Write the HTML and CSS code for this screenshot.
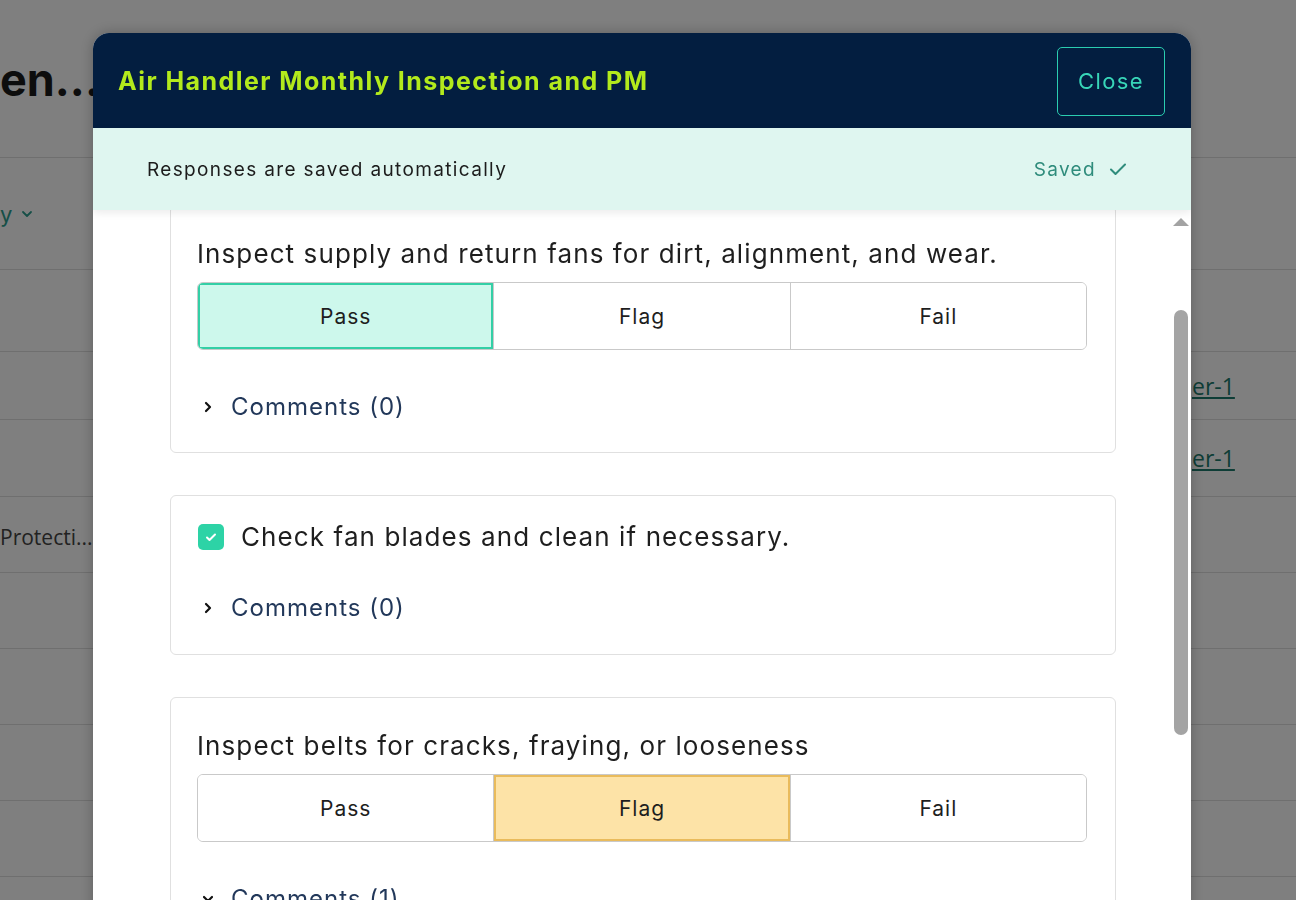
FILE: index.html
```html
<!DOCTYPE html>
<html lang="en">
<head>
    <meta charset="UTF-8">
    <meta name="viewport" content="width=device-width, initial-scale=1.0">
    <title>Air Handler Monthly Inspection and PM</title>
    <link rel="stylesheet" href="styles.css">
</head>
<body>

<div class="page">
    <h1 class="page-title">en...</h1>
    <div class="filters">
        <span class="filter">y
            <svg width="12" height="8" viewBox="0 0 12 8"><path d="M2 2l4 4 4-4" fill="none" stroke="currentColor" stroke-width="1.8" stroke-linecap="round" stroke-linejoin="round"/></svg>
        </span>
    </div>
    <div class="row h82"></div>
    <div class="row h68"><span class="cell-left"></span><a class="cell-link" href="#">er-1</a></div>
    <div class="row h77"><span class="cell-left"></span><a class="cell-link" href="#">er-1</a></div>
    <div class="row h75"><span class="cell-left">Protecti...</span></div>
    <div class="row h76"></div>
    <div class="row h76"></div>
    <div class="row h76"></div>
    <div class="row h76"></div>
</div>

<div class="overlay"></div>

<div class="modal">
    <div class="modal-header">
        <h2 class="modal-title">Air Handler Monthly Inspection and PM</h2>
        <button class="close-btn">Close</button>
    </div>
    <div class="save-bar">
        <span>Responses are saved automatically</span>
        <span class="saved">Saved
            <svg width="18" height="14" viewBox="0 0 18 14"><path d="M2 7.5l4.5 4.5L16 2.5" fill="none" stroke="currentColor" stroke-width="2" stroke-linecap="round" stroke-linejoin="round"/></svg>
        </span>
    </div>
    <div class="modal-body">
        <div class="task-list">
            <div class="task">
                <p class="task-text">Inspect supply and return fans for dirt, alignment, and wear.</p>
                <div class="choice-group">
                    <button class="choice pass selected">Pass</button>
                    <button class="choice">Flag</button>
                    <button class="choice">Fail</button>
                </div>
                <div class="comments">
                    <svg width="10" height="12" viewBox="0 0 10 12"><path d="M3 2l4 4-4 4" fill="none" stroke="currentColor" stroke-width="2.2" stroke-linecap="round" stroke-linejoin="round"/></svg>
                    <span>Comments (0)</span>
                </div>
            </div>

            <div class="task check-task">
                <label class="check-row">
                    <span class="checkbox">
                        <svg width="14" height="12" viewBox="0 0 14 12"><path d="M3 6.5l2.5 2.5L11 3.5" fill="none" stroke="#fff" stroke-width="2" stroke-linecap="round" stroke-linejoin="round"/></svg>
                    </span>
                    <span class="task-text">Check fan blades and clean if necessary.</span>
                </label>
                <div class="comments">
                    <svg width="10" height="12" viewBox="0 0 10 12"><path d="M3 2l4 4-4 4" fill="none" stroke="currentColor" stroke-width="2.2" stroke-linecap="round" stroke-linejoin="round"/></svg>
                    <span>Comments (0)</span>
                </div>
            </div>

            <div class="task">
                <p class="task-text">Inspect belts for cracks, fraying, or looseness</p>
                <div class="choice-group">
                    <button class="choice">Pass</button>
                    <button class="choice flag selected">Flag</button>
                    <button class="choice">Fail</button>
                </div>
                <div class="comments">
                    <svg width="10" height="12" viewBox="0 0 10 12"><path d="M1 4l4 4 4-4" fill="none" stroke="currentColor" stroke-width="2.2" stroke-linecap="round" stroke-linejoin="round"/></svg>
                    <span>Comments (1)</span>
                </div>
            </div>
        </div>
        <div class="scrollbar">
            <span class="scroll-up"></span>
            <span class="scroll-thumb"></span>
        </div>
    </div>
</div>

</body>
</html>
```

FILE: styles.css
```css
body {
    margin: 0;
    overflow: hidden;
    font-family: 'Inter', 'Noto Sans', sans-serif;
    background: #fff;
    color: #1a1a1a;
}

/* page behind the dialog */
.page {
    width: 1296px;
}

.page-title {
    margin: 0;
    height: 158px;
    display: flex;
    align-items: center;
    padding-top: 2px;
    box-sizing: border-box;
    font-size: 45px;
    font-weight: 700;
    color: #1b1b1b;
    border-bottom: 1px solid #dedede;
}

.filters {
    height: 111px;
    display: flex;
    align-items: center;
    border-bottom: 1px solid #dedede;
}

.filter {
    display: inline-flex;
    align-items: center;
    gap: 9px;
    font-size: 22px;
    color: #2c9e8e;
}

.row {
    display: flex;
    align-items: center;
    border-bottom: 1px solid #dedede;
    font-family: 'Open Sans', sans-serif;
    font-size: 21px;
    color: #444;
}

.h82 { height: 81px; }
.h68 { height: 67px; }
.h77 { height: 76px; }
.h75 { height: 75px; }
.h76 { height: 75px; }

.cell-left {
    width: 93px;
    padding-top: 4px;
    white-space: nowrap;
    overflow: hidden;
}

.cell-link {
    margin-left: auto;
    width: 104px;
    color: #1d7a6c;
    font-size: 23px;
}

.overlay {
    position: fixed;
    inset: 0;
    background: rgba(0, 0, 0, 0.5);
}

/* dialog */
.modal {
    position: fixed;
    left: 93px;
    top: 33px;
    width: 1098px;
    height: 1000px;
    background: #fff;
    border-radius: 16px 16px 0 0;
    overflow: hidden;
    display: flex;
    flex-direction: column;
    box-shadow: 0 0 14px rgba(0, 0, 0, 0.25);
}

.modal-header {
    height: 95px;
    flex-shrink: 0;
    background: #031e40;
    display: flex;
    align-items: center;
    justify-content: space-between;
    padding: 0 26px 0 25px;
}

.modal-title {
    margin: 0;
    font-size: 25px;
    font-weight: 700;
    color: #b3ea1c;
    letter-spacing: 1.45px;
}

.close-btn {
    width: 108px;
    height: 69px;
    margin-top: 1px;
    background: transparent;
    border: 1.5px solid #2bcdb0;
    border-radius: 5px;
    color: #38d6b8;
    font-family: inherit;
    font-size: 22px;
    letter-spacing: 1.4px;
}

.save-bar {
    height: 82px;
    flex-shrink: 0;
    background: #dff6f0;
    display: flex;
    align-items: center;
    justify-content: space-between;
    padding: 0 64px 0 54px;
    font-size: 19px;
    letter-spacing: 1.35px;
    color: #1c1c1c;
    position: relative;
    z-index: 1;
    box-shadow: 0 3px 8px rgba(0, 0, 0, 0.08);
}

.saved {
    display: inline-flex;
    align-items: center;
    gap: 13px;
    color: #2f8c7c;
}

.modal-body {
    flex: 1;
    display: flex;
    min-height: 0;
}

.task-list {
    flex: 1;
    padding: 0 54px 0 77px;
    margin-top: -5px;
    display: flex;
    flex-direction: column;
    gap: 42px;
}

.task {
    border: 1px solid #e0e0e0;
    border-radius: 6px;
    padding: 30px 28px 30px 26px;
}

.task-text {
    margin: 0;
    font-size: 26px;
    line-height: 36px;
    letter-spacing: 1.1px;
    color: #1e1e1e;
}

.choice-group {
    display: flex;
    margin-top: 10px;
    border: 1px solid #c9c9c9;
    border-radius: 6px;
    overflow: hidden;
}

.choice {
    flex: 1;
    height: 66px;
    background: #fff;
    border: none;
    border-left: 1px solid #c9c9c9;
    font-family: inherit;
    font-size: 21px;
    letter-spacing: 1px;
    color: #1e1e1e;
}

.choice:first-child {
    border-left: none;
}

.choice.pass.selected {
    background: #cdf8ec;
    box-shadow: inset 0 0 0 2px #33cfa6;
}

.choice.flag.selected {
    background: #fde3a7;
    box-shadow: inset 0 0 0 2px #e9bb5c;
}

.comments {
    margin-top: 42px;
    display: flex;
    align-items: center;
    gap: 18px;
    padding-left: 6px;
    font-size: 24px;
    line-height: 30px;
    letter-spacing: 1px;
    color: #22385a;
}

.comments svg {
    color: #111;
}

.check-task {
    padding-top: 23px;
    padding-bottom: 31px;
}

.check-row {
    display: flex;
    align-items: center;
    gap: 17px;
}

.checkbox {
    width: 26px;
    height: 26px;
    border-radius: 5px;
    background: #2dd3a6;
    display: flex;
    align-items: center;
    justify-content: center;
    margin-left: 1px;
}

.check-task .comments {
    margin-top: 38px;
}

.scrollbar {
    width: 21px;
    display: flex;
    flex-direction: column;
    align-items: center;
}

.scroll-up {
    margin-top: 8px;
    width: 0;
    height: 0;
    border-left: 8px solid transparent;
    border-right: 8px solid transparent;
    border-bottom: 8px solid #a3a3a3;
}

.scroll-thumb {
    margin-top: 84px;
    width: 14px;
    height: 425px;
    border-radius: 7px;
    background: #a4a4a4;
}
```
